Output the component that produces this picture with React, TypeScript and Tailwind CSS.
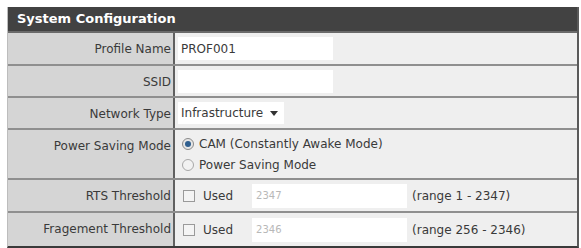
import React from "react";

const font = { fontFamily: '"DejaVu Sans", Verdana, sans-serif' };

function Row({ label, h, children, last }: { label: string; h: string; children: React.ReactNode; last?: boolean }) {
  return (
    <div className={`flex ${h} ${last ? "" : "border-b-2 border-[#8f8f8f]"}`}>
      <div className="w-[167px] shrink-0 bg-[#d5d5d5] border-r-2 border-[#606060] flex items-start justify-end pr-[2px] pt-[7px] text-[12px] text-[#3a3a3a]">
        {label}
      </div>
      <div className="flex-1 bg-[#efefef] flex items-center pl-[3px]">{children}</div>
    </div>
  );
}

export default function App() {
  return (
    <div className="w-[581px] h-[248px] bg-white pt-[7px] pl-[7px]" style={font}>
      <div className="w-[572px] border-l border-[#bdbdbd] border-r-2 border-r-[#5a5a5a] border-b-2 border-b-[#3a3a3a]">
        <div className="h-[26px] bg-[#424242] border-b-2 border-[#6a6a6a] flex items-center pl-[9px] text-white font-bold text-[13px]">
          System Configuration
        </div>
        <Row label="Profile Name" h="h-[33px]">
          <div className="w-[155px] h-[23px] bg-white flex items-center pl-[3px] text-[12px] text-[#3a3a3a]">PROF001</div>
        </Row>
        <Row label="SSID" h="h-[32px]">
          <div className="w-[155px] h-[23px] bg-white" />
        </Row>
        <Row label="Network Type" h="h-[32px]">
          <div className="flex items-center bg-white h-[22px] pl-[3px] pr-[6px] text-[12px] text-[#3a3a3a]">
            Infrastructure
            <svg width="8" height="5" viewBox="0 0 8 5" className="ml-[7px]">
              <path d="M0 0 L8 0 L4 5 Z" fill="#333" />
            </svg>
          </div>
        </Row>
        <div className="flex h-[50px] border-b-2 border-[#8f8f8f]">
          <div className="w-[167px] shrink-0 bg-[#d5d5d5] border-r-2 border-[#606060] flex items-start justify-end pr-[2px] pt-[7px] text-[12px] text-[#3a3a3a]">
            Power Saving Mode
          </div>
          <div className="flex-1 bg-[#efefef] flex flex-col justify-center gap-[3px] pl-[7px] text-[12px] text-[#3a3a3a]">
            <div className="flex items-center gap-[5px]">
              <span className="w-[12px] h-[12px] rounded-full border border-[#8a8a8a] bg-[#e6e6e6] flex items-center justify-center">
                <span className="w-[6px] h-[6px] rounded-full bg-[#2f5f8f]" />
              </span>
              CAM (Constantly Awake Mode)
            </div>
            <div className="flex items-center gap-[5px]">
              <span className="w-[12px] h-[12px] rounded-full border border-[#a8a8a8] bg-[#f2f2f2]" />
              Power Saving Mode
            </div>
          </div>
        </div>
        <Row label="RTS Threshold" h="h-[33px]">
          <div className="flex items-center text-[12px] text-[#3a3a3a]">
            <span className="ml-[5px] w-[12px] h-[12px] border border-[#9a9a9a] bg-[#f4f4f4]" />
            <span className="ml-[8px]">Used</span>
            <div className="ml-[19px] w-[155px] h-[24px] bg-white flex items-center pl-[4px] text-[10px] text-[#b8b8b8]">2347</div>
            <span className="ml-[5px]">(range 1 - 2347)</span>
          </div>
        </Row>
        <Row label="Fragement Threshold" h="h-[33px]" last>
          <div className="flex items-center text-[12px] text-[#3a3a3a]">
            <span className="ml-[5px] w-[12px] h-[12px] border border-[#9a9a9a] bg-[#f4f4f4]" />
            <span className="ml-[8px]">Used</span>
            <div className="ml-[19px] w-[155px] h-[24px] bg-white flex items-center pl-[4px] text-[10px] text-[#b8b8b8]">2346</div>
            <span className="ml-[5px]">(range 256 - 2346)</span>
          </div>
        </Row>
      </div>
    </div>
  );
}
